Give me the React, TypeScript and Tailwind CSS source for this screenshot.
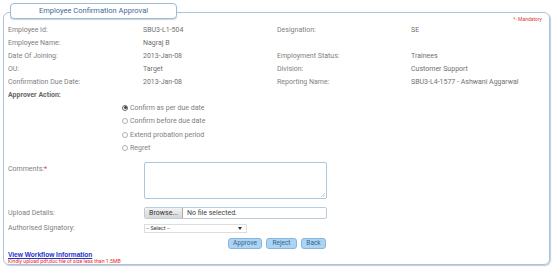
const details = [
  ['Employee Id:', 'SBU3-L1-504', 'Designation:', 'SE'],
  ['Employee Name:', 'Nagraj B', '', ''],
  ['Date Of Joining:', '2013-Jan-08', 'Employment Status:', 'Trainees'],
  ['OU:', 'Target', 'Division:', 'Customer Support'],
  ['Confirmation Due Date:', '2013-Jan-08', 'Reporting Name:', 'SBU3-L4-1577 - Ashwani Aggarwal'],
]

const actions = ['Confirm as per due date', 'Confirm before due date', 'Extend probation period', 'Regret']

const buttons = [
  { label: 'Approve', w: 'w-[34px]' },
  { label: 'Reject', w: 'w-[31px]' },
  { label: 'Back', w: 'w-[25px]' },
]

export default function App() {
  return (
    <div
      className="w-[553px] h-[267px] bg-white overflow-hidden pt-[3px] text-[7px] text-[#808080]"
      style={{ fontFamily: 'Roboto, "Liberation Sans", sans-serif' }}
    >
      {/* Tab */}
      <div className="relative z-10 ml-[10px] w-[167px] h-[16px] bg-white border border-[#9fbcd6] rounded-[4px] shadow-[0_1px_1px_rgba(120,150,180,0.4)] flex items-center justify-center text-[7.5px] text-[#3d6b93]">
        Employee Confirmation Approval
      </div>

      {/* Panel */}
      <div className="-mt-[7px] ml-[3px] w-[547px] h-[253px] border border-[#a9c3da] rounded-[6px] shadow-[1px_1px_1px_rgba(120,140,170,0.45)] pl-[4px] pt-[3px]">
        <div className="h-[8px] flex items-center justify-end pr-[7px] text-[5px] text-[#e03a3a]">*- Mandatory</div>

        {details.map((r, i) => (
          <div key={i} className="h-[13px] grid grid-cols-[135px_134px_134px_1fr] items-center">
            <span>{r[0]}</span>
            <span className="text-[#707070]">{r[1]}</span>
            <span>{r[2]}</span>
            <span className="text-[#707070]">{r[3]}</span>
          </div>
        ))}

        <div className="h-[12px] flex items-center font-bold text-[#666]">Approver Action:</div>

        <div className="pl-[114px]">
          {actions.map((a, i) => (
            <div key={a} className="h-[13.5px] flex items-center gap-[2px]">
              <span
                className={`w-[6px] h-[6px] rounded-full border flex items-center justify-center ${
                  i === 0 ? 'border-[#666]' : 'border-[#b0b0b0]'
                }`}
              >
                {i === 0 && <span className="w-[3px] h-[3px] rounded-full bg-[#444]" />}
              </span>
              <span>{a}</span>
            </div>
          ))}
        </div>

        <div className="mt-[7px] flex">
          <div className="w-[136px] pt-[2px]">
            Comments:<span className="text-[#e03a3a]">*</span>
          </div>
          <div className="w-[183px] h-[37px] border border-[#a9c9e2] rounded-[2px] flex items-end justify-end p-[1px]">
            <svg width="4" height="4" viewBox="0 0 4 4">
              <path d="M4 0L0 4M4 2L2 4" stroke="#aaa" strokeWidth="0.6" />
            </svg>
          </div>
        </div>

        <div className="mt-[8px] flex items-center">
          <div className="w-[136px]">Upload Details:</div>
          <div className="w-[183px] h-[12px] border border-[#b9cddd] rounded-[2px] flex items-center">
            <div className="h-full w-[38px] bg-gradient-to-b from-[#f2f2f2] to-[#d6d6d6] border-r border-[#aaa] rounded-l-[2px] flex items-center justify-center text-[#333]">
              Browse...
            </div>
            <span className="ml-[4px] text-[#444]">No file selected.</span>
          </div>
        </div>

        <div className="mt-[4px] flex items-center">
          <div className="w-[136px]">Authorised Signatory:</div>
          <div className="w-[103px] h-[9px] border border-[#ddd] flex items-center justify-between pl-[1px] pr-[4px] text-[5.5px] text-[#444]">
            <span>-- Select --</span>
            <svg width="4" height="3" viewBox="0 0 4 3">
              <path d="M0 0H4L2 3Z" fill="#333" />
            </svg>
          </div>
        </div>

        <div className="mt-[4px] w-[318px] flex justify-end gap-[4px]">
          {buttons.map((b) => (
            <button
              key={b.label}
              className={`${b.w} h-[11px] bg-[#acd3f1] border border-[#86b6dd] rounded-[3px] text-[6.5px] text-[#35648f] leading-none`}
            >
              {b.label}
            </button>
          ))}
        </div>

        <div
          className="mt-[2px] h-[8px] flex items-center font-bold underline text-[6.6px] text-[#2233cc]"
          style={{ fontFamily: '"Liberation Sans", sans-serif' }}
        >
          View Workflow Information
        </div>
        <div className="h-[6px] flex items-center text-[5.2px] text-[#ee1c1c]">
          Kindly upload pdf,doc file of size less than 1.5MB
        </div>
      </div>
    </div>
  )
}
